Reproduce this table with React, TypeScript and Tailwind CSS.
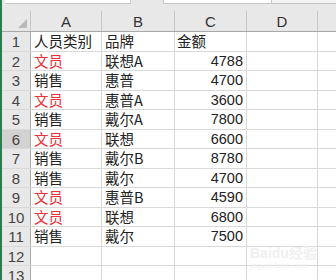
import React from "react";

const rows: [string, string, string, boolean][] = [
  ["人员类别", "品牌", "金额", false],
  ["文员", "联想A", "4788", true],
  ["销售", "惠普", "4700", false],
  ["文员", "惠普A", "3600", true],
  ["销售", "戴尔A", "7800", false],
  ["文员", "联想", "6600", true],
  ["销售", "戴尔B", "8780", false],
  ["销售", "戴尔", "4700", false],
  ["文员", "惠普B", "4590", true],
  ["文员", "联想", "6800", true],
  ["销售", "戴尔", "7500", false],
  ["", "", "", false],
  ["", "", "", false],
];

const heights = ["h-[20px]", "h-[19px]"];

export default function App() {
  const font = { fontFamily: '"Noto Sans CJK SC", "Noto Sans", sans-serif' };
  return (
    <div className="w-[336px] h-[280px] overflow-hidden bg-white relative border-l-2 border-[#2e7d4f]" style={font}>
      {/* top toolbar strip */}
      <div className="h-[11px] bg-[#e8e8e8] flex items-start">
        <div className="ml-[3px] w-[126px] h-[4px] bg-white border-b border-r border-[#c6c6c6]" />
        <div className="ml-[32px] w-[109px] h-[4px] bg-white border-b border-l border-r border-[#c6c6c6]" />
        <div className="flex-1 h-[4px] bg-[#f4f4f4] border-b border-[#c6c6c6]" />
      </div>
      {/* column header */}
      <div className="flex h-[21px] bg-[#e8e8e8] border-b border-[#a9a9a9] text-[#333] text-[15px] leading-none">
        <div className="w-[29px] border-r border-[#c6c6c6] relative">
          <div className="absolute right-[3px] bottom-[3px] w-0 h-0 border-l-[9px] border-l-transparent border-b-[9px] border-b-[#b9b9b9]" />
        </div>
        <div className="w-[71px] border-r border-[#c6c6c6] flex items-center justify-center" style={{ fontFamily: '"Liberation Sans", sans-serif' }}>A</div>
        <div className="w-[73px] border-r border-[#c6c6c6] flex items-center justify-center" style={{ fontFamily: '"Liberation Sans", sans-serif' }}>B</div>
        <div className="w-[72px] border-r border-[#c6c6c6] flex items-center justify-center" style={{ fontFamily: '"Liberation Sans", sans-serif' }}>C</div>
        <div className="w-[71px] border-r border-[#c6c6c6] flex items-center justify-center" style={{ fontFamily: '"Liberation Sans", sans-serif' }}>D</div>
        <div className="flex-1" />
      </div>
      {rows.map((r, i) => (
        <div key={i} className={`flex ${heights[i % 2]} border-b border-[#d9d9d9] text-[14.5px] leading-none`}>
          <div
            className={`w-[29px] border-r border-[#a9a9a9] flex items-center justify-center text-[15px] text-[#444] ${i === 5 ? "bg-[#d2d2d2]" : "bg-[#e8e8e8]"}`}
            style={{ fontFamily: '"Liberation Sans", sans-serif' }}
          >
            {i + 1}
          </div>
          <div className={`w-[71px] border-r border-[#d9d9d9] flex items-center pl-[3px] ${r[3] ? "text-[#e8323c]" : "text-[#222]"}`}>{r[0]}</div>
          <div className="w-[73px] border-r border-[#d9d9d9] flex items-center pl-[3px] text-[#222]">{r[1]}</div>
          <div className={`w-[72px] border-r border-[#d9d9d9] flex items-center text-[#222] ${i === 0 ? "pl-[2px]" : "justify-end pr-[3px]"}`}>
            {i === 0 ? r[2] : <span style={{ fontFamily: '"Liberation Sans", sans-serif' }}>{r[2]}</span>}
          </div>
          <div className="w-[71px] border-r border-[#d9d9d9]" />
          <div className="flex-1" />
        </div>
      ))}
      {/* faint watermark */}
      <div className="absolute left-[248px] top-[246px] text-[#f0f0f0] leading-none pointer-events-none">
        <div className="text-[14px] font-bold" style={{ fontFamily: '"Liberation Sans", "Noto Sans CJK SC", sans-serif' }}>Baidu经验</div>
        <div className="text-[7px] mt-[2px]" style={{ fontFamily: '"Liberation Sans", sans-serif' }}>jingyan.baidu.com</div>
      </div>
    </div>
  );
}
